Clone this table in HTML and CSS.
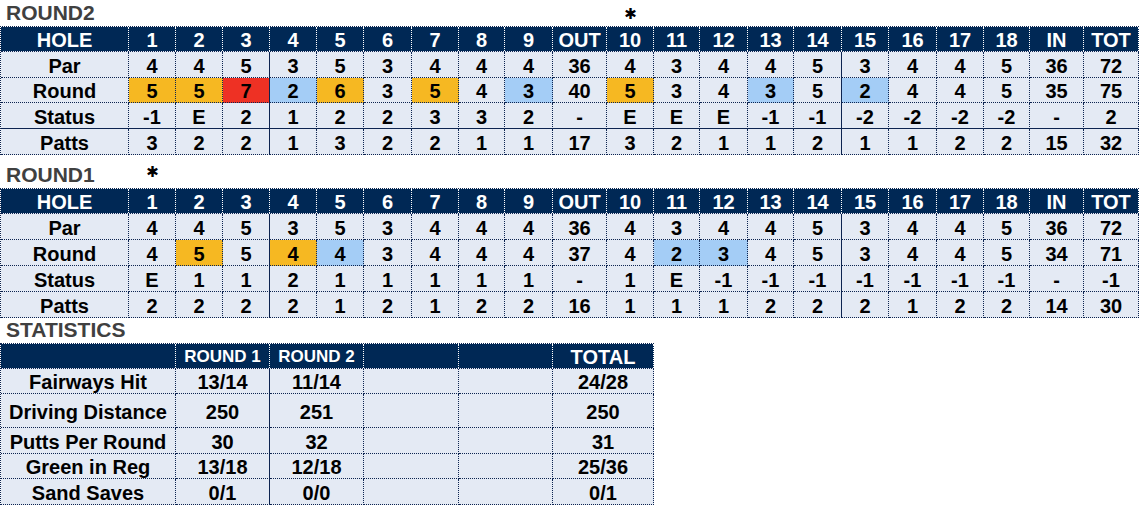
FILE: index.html
```html
<!DOCTYPE html>
<html>
<head>
<meta charset="utf-8">
<title>Scorecard</title>
<link rel="stylesheet" href="styles.css">
</head>
<body>
<section class="round">
  <div class="title-row t26">
    <h2 class="title">ROUND2</h2>
    <span class="star col-10">✱</span>
  </div>
  <div class="sheet card">
    <div class="row head"><span class="c">HOLE</span><span class="c">1</span><span class="c">2</span><span class="c">3</span><span class="c">4</span><span class="c">5</span><span class="c">6</span><span class="c">7</span><span class="c">8</span><span class="c">9</span><span class="c">OUT</span><span class="c">10</span><span class="c">11</span><span class="c">12</span><span class="c">13</span><span class="c">14</span><span class="c">15</span><span class="c">16</span><span class="c">17</span><span class="c">18</span><span class="c">IN</span><span class="c">TOT</span></div>
    <div class="row"><span class="c">Par</span><span class="c">4</span><span class="c">4</span><span class="c">5</span><span class="c">3</span><span class="c">5</span><span class="c">3</span><span class="c">4</span><span class="c">4</span><span class="c">4</span><span class="c">36</span><span class="c">4</span><span class="c">3</span><span class="c">4</span><span class="c">4</span><span class="c">5</span><span class="c">3</span><span class="c">4</span><span class="c">4</span><span class="c">5</span><span class="c">36</span><span class="c">72</span></div>
    <div class="row short"><span class="c">Round</span><span class="c bogey">5</span><span class="c bogey">5</span><span class="c double">7</span><span class="c birdie">2</span><span class="c bogey">6</span><span class="c">3</span><span class="c bogey">5</span><span class="c">4</span><span class="c birdie">3</span><span class="c">40</span><span class="c bogey">5</span><span class="c">3</span><span class="c">4</span><span class="c birdie">3</span><span class="c">5</span><span class="c birdie">2</span><span class="c">4</span><span class="c">4</span><span class="c">5</span><span class="c">35</span><span class="c">75</span></div>
    <div class="row sep"><span class="c">Status</span><span class="c">-1</span><span class="c">E</span><span class="c">2</span><span class="c">1</span><span class="c">2</span><span class="c">2</span><span class="c">3</span><span class="c">3</span><span class="c">2</span><span class="c">-</span><span class="c">E</span><span class="c">E</span><span class="c">E</span><span class="c">-1</span><span class="c">-1</span><span class="c">-2</span><span class="c">-2</span><span class="c">-2</span><span class="c">-2</span><span class="c">-</span><span class="c">2</span></div>
    <div class="row"><span class="c">Patts</span><span class="c">3</span><span class="c">2</span><span class="c">2</span><span class="c">1</span><span class="c">3</span><span class="c">2</span><span class="c">2</span><span class="c">1</span><span class="c">1</span><span class="c">17</span><span class="c">3</span><span class="c">2</span><span class="c">1</span><span class="c">1</span><span class="c">2</span><span class="c">1</span><span class="c">1</span><span class="c">2</span><span class="c">2</span><span class="c">15</span><span class="c">32</span></div>
  </div>
</section>

<section class="round">
  <div class="title-row t33">
    <h2 class="title">ROUND1</h2>
    <span class="star col-1">✱</span>
  </div>
  <div class="sheet card">
    <div class="row head"><span class="c">HOLE</span><span class="c">1</span><span class="c">2</span><span class="c">3</span><span class="c">4</span><span class="c">5</span><span class="c">6</span><span class="c">7</span><span class="c">8</span><span class="c">9</span><span class="c">OUT</span><span class="c">10</span><span class="c">11</span><span class="c">12</span><span class="c">13</span><span class="c">14</span><span class="c">15</span><span class="c">16</span><span class="c">17</span><span class="c">18</span><span class="c">IN</span><span class="c">TOT</span></div>
    <div class="row"><span class="c">Par</span><span class="c">4</span><span class="c">4</span><span class="c">5</span><span class="c">3</span><span class="c">5</span><span class="c">3</span><span class="c">4</span><span class="c">4</span><span class="c">4</span><span class="c">36</span><span class="c">4</span><span class="c">3</span><span class="c">4</span><span class="c">4</span><span class="c">5</span><span class="c">3</span><span class="c">4</span><span class="c">4</span><span class="c">5</span><span class="c">36</span><span class="c">72</span></div>
    <div class="row"><span class="c">Round</span><span class="c">4</span><span class="c bogey">5</span><span class="c">5</span><span class="c bogey">4</span><span class="c birdie">4</span><span class="c">3</span><span class="c">4</span><span class="c">4</span><span class="c">4</span><span class="c">37</span><span class="c">4</span><span class="c birdie">2</span><span class="c birdie">3</span><span class="c">4</span><span class="c">5</span><span class="c">3</span><span class="c">4</span><span class="c">4</span><span class="c">5</span><span class="c">34</span><span class="c">71</span></div>
    <div class="row"><span class="c">Status</span><span class="c">E</span><span class="c">1</span><span class="c">1</span><span class="c">2</span><span class="c">1</span><span class="c">1</span><span class="c">1</span><span class="c">1</span><span class="c">1</span><span class="c">-</span><span class="c">1</span><span class="c">E</span><span class="c">-1</span><span class="c">-1</span><span class="c">-1</span><span class="c">-1</span><span class="c">-1</span><span class="c">-1</span><span class="c">-1</span><span class="c">-</span><span class="c">-1</span></div>
    <div class="row"><span class="c">Patts</span><span class="c">2</span><span class="c">2</span><span class="c">2</span><span class="c">2</span><span class="c">1</span><span class="c">2</span><span class="c">1</span><span class="c">2</span><span class="c">2</span><span class="c">16</span><span class="c">1</span><span class="c">1</span><span class="c">1</span><span class="c">2</span><span class="c">2</span><span class="c">2</span><span class="c">1</span><span class="c">2</span><span class="c">2</span><span class="c">14</span><span class="c">30</span></div>
  </div>
</section>

<section class="stats">
  <div class="title-row t25">
    <h2 class="title wide">STATISTICS</h2>
  </div>
  <div class="sheet summary">
    <div class="row head"><span class="c"></span><span class="c small">ROUND 1</span><span class="c small">ROUND 2</span><span class="c"></span><span class="c"></span><span class="c">TOTAL</span></div>
    <div class="row short"><span class="c">Fairways Hit</span><span class="c">13/14</span><span class="c">11/14</span><span class="c"></span><span class="c"></span><span class="c">24/28</span></div>
    <div class="row tall"><span class="c">Driving Distance</span><span class="c">250</span><span class="c">251</span><span class="c"></span><span class="c"></span><span class="c">250</span></div>
    <div class="row"><span class="c">Putts Per Round</span><span class="c">30</span><span class="c">32</span><span class="c"></span><span class="c"></span><span class="c">31</span></div>
    <div class="row short"><span class="c">Green in Reg</span><span class="c">13/18</span><span class="c">12/18</span><span class="c"></span><span class="c"></span><span class="c">25/36</span></div>
    <div class="row"><span class="c">Sand Saves</span><span class="c">0/1</span><span class="c">0/0</span><span class="c"></span><span class="c"></span><span class="c">0/1</span></div>
  </div>
</section>
</body>
</html>
```

FILE: styles.css
```css
html, body {
  margin: 0;
  padding: 0;
  background: #ffffff;
  overflow: hidden;
}

body {
  font-family: "Liberation Sans", Arial, sans-serif;
  font-weight: bold;
  color: #000;
}

.round, .stats {
  --cols: 128px 47px 47px 47px 47px 47px 48px 47px 46px 48px 54px 47px 46px 48px 46px 48px 47px 48px 47px 46px 54px 55px;
}

.title-row {
  display: grid;
  grid-template-columns: var(--cols);
  align-items: end;
  padding-left: 1px;
}

.t26 { height: 26px; }
.t33 { height: 33px; }
.t25 { height: 25px; }

.title {
  grid-column: 1;
  grid-row: 1;
  margin: 0;
  padding: 0 0 3px 5px;
  font-size: 21px;
  line-height: 21px;
  font-weight: bold;
  color: #404040;
  white-space: nowrap;
}

.title.wide {
  grid-column: 1 / span 3;
}

.star {
  grid-row: 1;
  align-self: end;
  justify-self: center;
  font-family: "DejaVu Sans", sans-serif;
  font-size: 15px;
  line-height: 15px;
  color: #000;
  padding-bottom: 4px;
}

.col-10 { grid-column: 12; }
.col-1 { grid-column: 2; padding-bottom: 8px; }

.sheet {
  border-top: 1px dotted #0d2450;
  border-left: 1px dotted #0d2450;
}

.card { width: 1138px; }
.summary { width: 653px; }

.row {
  display: grid;
  grid-template-columns: var(--cols);
  height: 26px;
  background: #e4eaf4;
}

.summary .row {
  grid-template-columns: 175px 94px 94px 95px 94px 101px;
}

.row.short { height: 25px; }
.row.tall { height: 34px; }

.c {
  box-sizing: border-box;
  display: flex;
  align-items: center;
  justify-content: center;
  padding-top: 2px;
  font-size: 20px;
  line-height: 20px;
  white-space: nowrap;
  background: #e4eaf4;
  border-right: 1px dotted #0d2450;
  border-bottom: 1px dotted #0d2450;
}

.row.head {
  height: 25px;
  border-bottom: 1px dotted #0d2450;
  box-sizing: border-box;
}

.row.head .c {
  background: #002855;
  color: #ffffff;
  border-bottom: none;
  border-right-color: #ffffff;
}

.row.head .c.small {
  font-size: 17px;
}

.card .row:not(.head) .c:nth-child(4),
.card .row:not(.head) .c:nth-child(16),
.summary .row:not(.head) .c:nth-child(2) {
  border-right: 1px solid #0d2450;
}

.row.sep .c {
  border-bottom: 1px solid #0d2450;
}

.c.bogey { background: #f6b822; }
.c.double { background: #ee3124; }
.c.birdie { background: #a4cdf6; }
```
